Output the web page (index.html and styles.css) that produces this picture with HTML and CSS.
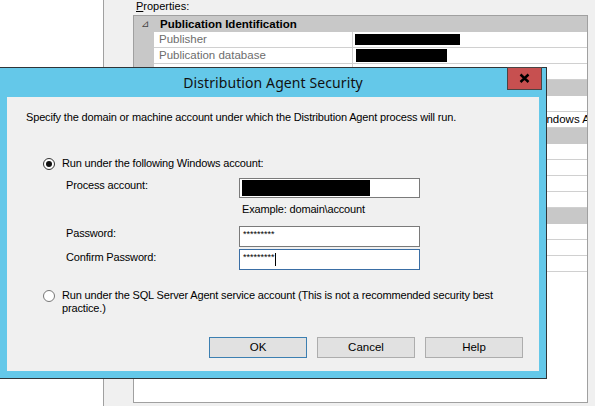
FILE: index.html
```html
<!DOCTYPE html>
<html>
<head>
<meta charset="utf-8">
<title>Distribution Agent Security</title>
<link rel="stylesheet" href="styles.css">
</head>
<body>
<div class="screen">
  <div class="left-pane"></div>
  <div class="panel">
    <div class="props-label"><u>P</u>roperties:</div>
    <div class="grid">
      <div class="cat"><span class="toggle">&#8895;</span><span class="cat-title">Publication Identification</span></div>
      <div class="row"><span class="gutter"></span><span class="name">Publisher</span><span class="value"><span class="redact r-pub"></span></span></div>
      <div class="row"><span class="gutter"></span><span class="name">Publication database</span><span class="value"><span class="redact r-db"></span></span></div>
      <div class="row"><span class="gutter"></span><span class="name">Publication</span><span class="value"></span></div>
      <div class="cat"><span class="toggle">&#8895;</span><span class="cat-title">Subscription Identification</span></div>
      <div class="row"><span class="gutter"></span><span class="name">Subscriber</span><span class="value"></span></div>
      <div class="row"><span class="gutter"></span><span class="name">Agent process account</span><span class="value"><span class="far-text">Windows Account</span></span></div>
      <div class="cat"><span class="toggle">&#8895;</span><span class="cat-title">Subscriber Connection</span></div>
      <div class="row"><span class="gutter"></span><span class="name">Server</span><span class="value"></span></div>
      <div class="row"><span class="gutter"></span><span class="name">Login</span><span class="value"></span></div>
      <div class="row"><span class="gutter"></span><span class="name">Password</span><span class="value"></span></div>
      <div class="row"><span class="gutter"></span><span class="name">Database</span><span class="value"></span></div>
      <div class="cat"><span class="toggle">&#8895;</span><span class="cat-title">Agent Schedule</span></div>
      <div class="row"><span class="gutter"></span><span class="name">Schedule</span><span class="value"></span></div>
      <div class="row"><span class="gutter"></span><span class="name">Start time</span><span class="value"></span></div>
      <div class="row"><span class="gutter"></span><span class="name">End time</span><span class="value"></span></div>
    </div>
  </div>

  <div class="dialog">
    <div class="titlebar">
      <span class="title">Distribution Agent Security</span>
      <div class="close">
        <svg width="33" height="21" viewBox="0 0 33 21"><path d="M12.5 6.5 L20.5 14 M20.5 6.5 L12.5 14" stroke="#000" stroke-width="2.4" fill="none"/></svg>
      </div>
    </div>
    <div class="client">
      <p class="desc">Specify the domain or machine account under which the Distribution Agent process will run.</p>
      <div class="option opt1"><span class="radio checked"></span><span class="opt-label">Run under the following Windows account:</span></div>
      <div class="form">
        <span class="flabel l-first">Process account:</span>
        <div class="textbox tb-first"><span class="redact r-acct"></span></div>
        <span></span>
        <div class="hint">Example: domain\account</div>
        <span class="flabel l-pass">Password:</span>
        <div class="textbox tb-pass"><span class="stars">*********</span></div>
        <span class="flabel l-conf">Confirm Password:</span>
        <div class="textbox tb-conf focused"><span class="stars">*********</span><span class="caret"></span></div>
      </div>
      <div class="option opt2"><span class="radio"></span><span class="opt-label wrap">Run under the SQL Server Agent service account (This is not a recommended security best practice.)</span></div>
      <div class="buttons">
        <div class="btn default">OK</div>
        <div class="btn">Cancel</div>
        <div class="btn">Help</div>
      </div>
    </div>
  </div>
</div>
</body>
</html>
```
FILE: styles.css
```css
html, body { margin: 0; padding: 0; }
body {
  font-family: "Liberation Sans", Arial, sans-serif;
  font-size: 11px;
  color: #000;
  background: #f0f0f0;
}
.screen {
  position: relative;
  width: 595px;
  height: 406px;
  overflow: hidden;
  display: flex;
  background: #f0f0f0;
}
.left-pane {
  width: 103px;
  background: #fff;
  border-right: 1px solid #a0a0a0;
}
.panel {
  flex: 1;
  padding-left: 29px;
}
.props-label {
  height: 15px;
  line-height: 13px;
  padding-left: 3px;
}
.props-label u { text-decoration-thickness: 1px; }
.grid {
  width: 455px;
  height: 388px;
  box-sizing: border-box;
  border: 1px solid #a0a0a0;
  background: #fff;
}
.cat {
  height: 16px;
  line-height: 16px;
  background: #c8c8c8;
  display: flex;
  white-space: nowrap;
}
.toggle {
  width: 26px;
  padding-left: 7px;
  box-sizing: border-box;
  font-size: 10px;
  color: #444;
}
.cat-title { font-weight: bold; font-size: 11.5px; }
.row {
  height: 16px;
  display: flex;
  white-space: nowrap;
}
.gutter {
  width: 20px;
  background: #c8c8c8;
}
.name {
  width: 199px;
  box-sizing: border-box;
  border-right: 1px solid #d0d0d0;
  border-bottom: 1px solid #d0d0d0;
  padding-left: 5px;
  line-height: 15px;
  color: #6d6d6d;
  font-size: 11.5px;
}
.value {
  flex: 1;
  border-bottom: 1px solid #d0d0d0;
  line-height: 15px;
  overflow: hidden;
}
.redact { display: block; background: #000; }
.r-pub { width: 105px; height: 11px; margin: 2px 0 0 2px; }
.r-db { width: 91px; height: 13px; margin: 1px 0 0 3px; }
.far-text { display: block; padding-left: 180px; font-size: 11.5px; }

/* dialog */
.dialog {
  position: absolute;
  left: -1px;
  top: 67px;
  width: 548px;
  height: 312px;
  box-sizing: border-box;
  border: 1px solid #2f3538;
  background: #64c8e9;
  padding: 0 7px 7px 7px;
  z-index: 2;
}
.titlebar {
  height: 29px;
  line-height: 29px;
  text-align: center;
}
.title {
  font-family: "Noto Sans", "Open Sans", sans-serif;
  font-size: 14px;
  color: #111;
  letter-spacing: 0.1px;
}
.close {
  position: absolute;
  left: 507px;
  top: -1px;
  width: 35px;
  height: 23px;
  box-sizing: border-box;
  border: 1px solid #4a4444;
  background: #c75050;
}
.close svg { display: block; }
.client {
  height: 274px;
  background: #f0f0f0;
  padding-left: 19px;
  letter-spacing: -0.16px;
}
.desc {
  margin: 0;
  padding-top: 14px;
  line-height: 13px;
}
.option {
  display: flex;
  align-items: flex-start;
  margin-left: 17px;
  line-height: 13px;
}
.opt1 { margin-top: 33px; }
.opt2 { margin-top: 19px; }
.radio {
  width: 12px;
  height: 12px;
  box-sizing: border-box;
  border: 1px solid #777;
  border-radius: 50%;
  background: #fff;
  margin: 1px 7px 0 0;
  flex: none;
  position: relative;
}
.radio.checked { border-color: #333; }
.radio.checked::after {
  content: "";
  position: absolute;
  left: 2px;
  top: 2px;
  width: 6px;
  height: 6px;
  border-radius: 50%;
  background: #111;
}
.opt-label.wrap { width: 440px; }
.form {
  display: grid;
  grid-template-columns: 173px 181px;
  margin: 8px 0 0 40px;
  line-height: 13px;
}
.flabel { padding-top: 1px; }
.textbox {
  box-sizing: border-box;
  border: 1px solid #7a7a7a;
  background: #fff;
  display: flex;
  align-items: center;
  padding-left: 2px;
}
.textbox.focused { border-color: #3a6ea5; }
.tb-first { height: 20px; align-items: flex-start; }
.tb-pass { height: 21px; margin-top: 10px; }
.l-pass { margin-top: 10px; padding-top: 1px; }
.tb-conf { height: 21px; margin-top: 2px; }
.l-conf { margin-top: 2px; padding-top: 2px; }
.r-acct { width: 128px; height: 16px; margin-top: 1px; }
.hint { margin-top: 5px; padding-left: 3px; }
.stars {
  font-size: 9px;
  line-height: 9px;
  margin-top: -4px;
  padding-left: 1px;
  letter-spacing: 0;
}
.caret {
  display: block;
  width: 1px;
  height: 13px;
  background: #000;
}
.buttons {
  display: flex;
  justify-content: flex-end;
  gap: 10px;
  margin-top: 22px;
  padding-right: 16px;
}
.btn {
  width: 98px;
  height: 21px;
  box-sizing: border-box;
  border: 1px solid #adadad;
  background: #e1e1e1;
  text-align: center;
  line-height: 19px;
  font-size: 11.5px;
  letter-spacing: 0;
}
.btn.default { border-color: #3c7fb1; }
```
